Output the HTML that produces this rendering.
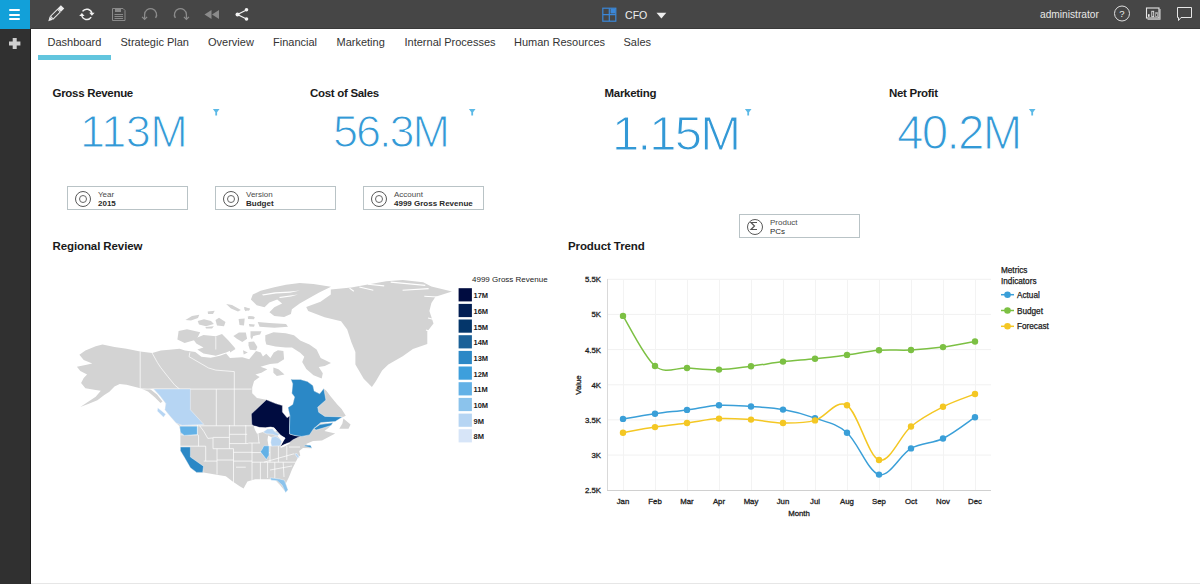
<!DOCTYPE html>
<html><head><meta charset="utf-8">
<style>
*{margin:0;padding:0;box-sizing:border-box}
html,body{width:1200px;height:584px;overflow:hidden;background:#fff;font-family:"Liberation Sans",sans-serif;position:relative}
.abs{position:absolute}
#top{left:0;top:0;width:1200px;height:29px;background:#464646;border-bottom:1px solid #393939}
#side{left:0;top:29px;width:31px;height:555px;background:#303030;border-right:1px solid #1c1c1c}
#menu{left:0;top:0;width:30px;height:29px;background:#12a0d9}
.bar{position:absolute;left:9px;width:11px;height:2px;background:#fff;border-radius:1px}
.tab{position:absolute;top:36px;font-size:11px;color:#333;white-space:nowrap}
#uline{left:38px;top:55px;width:73px;height:5px;background:#62c5de}
.kt{position:absolute;top:87px;font-size:11.5px;letter-spacing:-0.3px;font-weight:bold;color:#1a1a1a;white-space:nowrap}
.kv{position:absolute;top:105px;font-size:45px;color:#3399d6;white-space:nowrap;-webkit-text-stroke:1.2px #fff;letter-spacing:-0.5px}
.tri{position:absolute;width:0;height:0;border-left:3px solid transparent;border-right:3px solid transparent;border-top:4px solid #4ba8dc}
.fb{position:absolute;width:121px;height:24px;border:1px solid #b9c3c6;background:#fff}
.fb .ic{position:absolute;left:6.5px;top:3.5px;width:16.5px;height:16.5px;border:1.8px solid #595959;border-radius:50%}
.fb .ic2{position:absolute;left:10.5px;top:7.5px;width:8.5px;height:8.5px;border:1.1px solid #666;border-radius:50%}
.fb .l1{position:absolute;left:30px;top:2.5px;font-size:8px;color:#4a4a4a}
.fb .l2{position:absolute;left:30px;top:11.5px;font-size:8px;color:#2a2a2a;font-weight:bold}
.st{position:absolute;font-size:11.5px;letter-spacing:-0.1px;font-weight:bold;color:#1a1a1a;white-space:nowrap}
svg text.ax{font-family:"Liberation Sans",sans-serif;font-size:7.8px;fill:#222;stroke:#222;stroke-width:0.3px}
svg text.lg{font-family:"Liberation Sans",sans-serif;font-size:8.2px;fill:#1a1a1a;stroke:#1a1a1a;stroke-width:0.25px}
svg text.ml{font-family:"Liberation Sans",sans-serif;font-size:8px;fill:#222}
svg text.mll{font-family:"Liberation Sans",sans-serif;font-size:7.5px;font-weight:bold;fill:#222}
#bline{left:31px;top:583px;width:1169px;height:1px;background:#e6e6e6}
</style></head><body>
<div id="top" class="abs"></div>
<div id="side" class="abs"></div>
<div id="menu" class="abs"><div class="bar" style="top:9px"></div><div class="bar" style="top:13.5px"></div><div class="bar" style="top:18px"></div></div>
<svg class="abs" style="left:0;top:0" width="1200" height="29" viewBox="0 0 1200 29">
 <!-- pencil -->
 <g transform="translate(48.3,21.2) rotate(-45)">
  <path d="M0,0 L4.2,-2.3 L4.2,2.3 Z" fill="#e6e6e6"/>
  <rect x="5" y="-1.9" width="10" height="3.8" fill="none" stroke="#e6e6e6" stroke-width="1"/>
  <rect x="15.6" y="-2.4" width="4.6" height="4.8" fill="#ececec"/>
 </g>
 <!-- refresh -->
 <g fill="none" stroke="#f0f0f0" stroke-width="1.5">
  <path d="M82.5,11.4 A5.2,5.2 0 0 1 91.9,13.6"/>
  <path d="M91.2,17.2 A5.2,5.2 0 0 1 81.7,15"/>
 </g>
 <path d="M89.2,12.8 L94.6,12.8 L91.9,15.8 Z" fill="#f0f0f0"/>
 <path d="M79.2,16 L84.6,16 L81.9,13 Z" fill="#f0f0f0"/>
 <!-- floppy -->
 <g fill="none" stroke="#8a8a8a" stroke-width="1">
  <path d="M112.5,8.5 H123 L125,10.5 V20.5 H112.5 Z"/>
  <path d="M114.5,14.5 H123 M114.5,16.5 H123 M114.5,18.5 H123"/>
 </g>
 <rect x="115" y="8.5" width="6" height="3.5" fill="#8a8a8a"/>
 <!-- undo -->
 <g fill="none" stroke="#8c8c8c" stroke-width="1.3">
  <path d="M144.6,18.8 L144.6,14.6 A6,6 0 1 1 155.6,18"/>
  <path d="M142.1,16.9 L144.6,19.4 L147.1,16.9"/>
  <path d="M186.4,18.8 L186.4,14.6 A6,6 0 1 0 175.4,18"/>
  <path d="M183.9,16.9 L186.4,19.4 L188.9,16.9"/>
 </g>
 <!-- rewind -->
 <path d="M204.5,14.5 L211.5,10 V19 Z M212,14.5 L219,10 V19 Z" fill="#8a8a8a"/>
 <!-- share -->
 <g stroke="#f2f2f2" stroke-width="1.3" fill="none"><path d="M246.5,10 L237.5,14.5 L246.5,19"/></g>
 <circle cx="246.5" cy="9.8" r="1.8" fill="#f2f2f2"/><circle cx="237.5" cy="14.4" r="2" fill="#f2f2f2"/><circle cx="246.5" cy="19" r="1.8" fill="#f2f2f2"/>
 <!-- CFO icon -->
 <g fill="none" stroke="#3b87d8" stroke-width="1.2">
  <rect x="602.8" y="8.2" width="13" height="13"/>
  <path d="M609.3,8.2 V21.2 M602.8,14.7 H615.8"/>
 </g>
 <rect x="610.5" y="8.5" width="5" height="5" fill="#3b87d8"/>
 <text x="625" y="19" style="font-family:'Liberation Sans';font-size:10.6px;fill:#eee">CFO</text>
 <path d="M656.5,12.8 L666.3,12.8 L661.4,18.6 Z" fill="#eee"/>
 <text x="1040" y="18" style="font-family:'Liberation Sans';font-size:10.2px;fill:#e8e8e8">administrator</text>
 <!-- help -->
 <circle cx="1122" cy="13.5" r="7.5" fill="none" stroke="#e0e0e0" stroke-width="1"/>
 <text x="1122" y="17.2" text-anchor="middle" style="font-family:'Liberation Sans';font-size:9.5px;fill:#eee">?</text>
 <!-- chart icon -->
 <rect x="1146.5" y="8" width="12.5" height="10" fill="none" stroke="#e6e6e6" stroke-width="1.1"/>
 <path d="M1147.5,19.2 H1160 V9" fill="none" stroke="#d0d0d0" stroke-width="1.1"/>
 <rect x="1148" y="14.2" width="1.6" height="2.6" fill="#eee"/>
 <rect x="1151.8" y="11.3" width="1.9" height="5.4" fill="none" stroke="#e0e0e0" stroke-width="0.9"/>
 <rect x="1155.6" y="12.6" width="1.9" height="4.1" fill="none" stroke="#aaa" stroke-width="0.9"/>
 <!-- comment -->
 <path d="M1177.5,7.5 H1191.5 V17.5 H1181 L1178.5,20.5 V17.5 H1177.5 Z" fill="none" stroke="#e6e6e6" stroke-width="1"/>
</svg>
<!-- plus -->
<svg class="abs" style="left:0;top:29px" width="31" height="30"><path d="M14.7,9 V20 M9,14.4 H20.4" stroke="#cfcfcf" stroke-width="4"/></svg>

<div class="tab" style="left:47.5px">Dashboard</div>
<div class="tab" style="left:120.5px">Strategic Plan</div>
<div class="tab" style="left:208px">Overview</div>
<div class="tab" style="left:273px">Financial</div>
<div class="tab" style="left:336.5px">Marketing</div>
<div class="tab" style="left:404.5px">Internal Processes</div>
<div class="tab" style="left:514px">Human Resources</div>
<div class="tab" style="left:623.5px">Sales</div>
<div id="uline" class="abs"></div>

<div class="kt" style="left:52.5px">Gross Revenue</div>
<div class="kt" style="left:310px">Cost of Sales</div>
<div class="kt" style="left:604.5px">Marketing</div>
<div class="kt" style="left:889px">Net Profit</div>
<div class="kv" style="left:80px;top:106px">113M</div>
<div class="kv" style="left:333px;top:106px;letter-spacing:-2px">56.3M</div>
<div class="kv" style="left:612px;top:105px;font-size:49px;letter-spacing:-1.8px">1.15M</div>
<div class="kv" style="left:897px;top:105px;font-size:47.5px;letter-spacing:-1.7px">40.2M</div>
<svg class="abs" style="left:0;top:0" width="1200" height="130"><path d="M212.9,109 H219.5 L217.1,112.3 V115.5 H215.3 V112.3 Z" fill="#5cb9e6"/><path d="M468.9,109 H475.5 L473.1,112.3 V115.5 H471.3 V112.3 Z" fill="#5cb9e6"/><path d="M744.9,109 H751.5 L749.1,112.3 V115.5 H747.3 V112.3 Z" fill="#5cb9e6"/><path d="M1028.9,109 H1035.5 L1033.1,112.3 V115.5 H1031.3 V112.3 Z" fill="#5cb9e6"/></svg>

<div class="fb" style="left:67px;top:186px"><div class="ic"></div><div class="ic2"></div><div class="l1">Year</div><div class="l2">2015</div></div>
<div class="fb" style="left:215px;top:186px"><div class="ic"></div><div class="ic2"></div><div class="l1">Version</div><div class="l2">Budget</div></div>
<div class="fb" style="left:363px;top:186px"><div class="ic"></div><div class="ic2"></div><div class="l1">Account</div><div class="l2">4999 Gross Revenue</div></div>
<div class="fb" style="left:739px;top:214px"><div class="ic"></div><div class="l1">Product</div><div class="l2" style="font-weight:normal">PCs</div><svg style="position:absolute;left:9px;top:6px" width="10" height="10"><path d="M8,1.5 H2 L5.5,5 L2,8.5 H8" fill="none" stroke="#555" stroke-width="1.2"/></svg></div>

<div class="st" style="left:52.5px;top:240px">Regional Review</div>
<div class="st" style="left:568px;top:240px">Product Trend</div>

<svg class="abs" style="left:0;top:0" width="1200" height="584" viewBox="0 0 1200 584">
<polygon points="79.4,354.8 85.4,350.6 95.7,346.3 102.5,344.6 114.5,347.1 126.5,348.8 140.2,351.4 152.2,353.1 160.8,350.6 169.4,349.7 179.6,348.8 185.0,350.6 195.3,352.1 201.4,356.7 210.7,357.7 220.0,355.7 226.1,353.6 230.0,357.9 242.3,357.2 249.2,359.2 256.0,351.0 260.8,352.4 262.9,356.5 266.3,353.8 270.4,357.9 273.8,352.4 277.9,350.3 283.4,351.0 284.1,359.2 277.7,363.3 270.0,364.1 260.5,366.7 267.4,369.2 261.4,372.7 255.4,374.4 259.7,377.0 254.1,381.0 252.2,387.6 252.2,393.2 257.0,398.0 266.4,399.8 275.8,403.6 282.4,405.5 282.4,412.1 287.1,417.7 289.9,415.8 288.0,407.4 292.7,404.5 294.6,397.0 291.8,393.2 292.7,383.8 290.8,379.1 292.3,379.5 300.5,379.5 307.4,381.5 312.9,385.6 314.2,391.1 319.7,393.8 323.8,388.4 326.6,391.1 330.7,396.6 337.5,404.8 341.6,408.9 345.8,415.8 342.4,417.2 318.0,424.0 333.0,422.5 329.0,427.5 324.4,431.0 335.2,433.4 322.0,440.6 313.0,441.0 306.0,444.0 312.0,448.3 303.0,448.0 299.2,451.0 300.3,455.4 298.3,457.0 295.2,463.1 292.1,469.3 289.0,477.0 285.9,483.2 287.5,490.9 285.2,491.6 279.8,484.7 275.2,480.1 270.5,479.3 261.3,479.3 255.1,479.3 247.4,481.6 243.6,488.6 239.7,486.3 232.0,480.9 225.8,476.2 216.6,474.7 203.5,472.4 196.6,472.4 190.4,467.8 184.2,457.0 180.4,450.8 180.4,447.0 180.4,435.4 180.4,432.3 179.6,426.2 176.1,423.1 169.9,416.0 164.8,409.8 165.8,403.6 159.6,395.4 153.5,388.7 147.0,389.0 140.2,388.2 133.4,386.5 126.5,384.8 119.7,384.0 114.5,386.5 109.4,391.7 104.3,395.1 97.4,400.2 88.8,403.7 80.3,407.1 95.7,396.8 100.8,390.8 95.7,390.0 85.4,388.2 81.1,383.1 83.7,378.0 87.1,374.5 80.3,371.1 76.9,366.8 85.4,365.1 92.3,363.4 83.7,360.0" fill="#d3d3d3" />
<polygon points="141.0,388.4 150.0,389.0 157.0,394.5 162.5,401.5 160.5,403.0 155.0,397.5 148.0,391.5" fill="#d3d3d3" />
<polygon points="260.6,290.7 274.3,287.3 286.0,284.8 299.7,282.9 313.4,283.9 331.0,286.8 319.2,292.6 308.5,298.5 299.7,303.4 291.9,309.3 290.9,314.1 284.1,317.1 274.3,316.1 269.4,312.2 274.3,307.3 282.1,303.4 277.2,299.5 269.4,302.4 264.5,307.3 256.7,305.3 250.9,299.5 252.8,294.6" fill="#d3d3d3" />
<polygon points="257.7,322.0 269.4,322.9 286.0,323.9 288.0,326.8 274.3,327.8 259.6,326.8" fill="#d3d3d3" />
<polygon points="245.0,307.3 249.9,309.3 245.0,311.2" fill="#d3d3d3" />
<polygon points="248.9,316.0 253.8,316.5 253.0,319.0 249.0,318.5" fill="#d3d3d3" />
<polygon points="248.9,323.9 254.8,324.5 254.0,326.8 249.5,326.5" fill="#d3d3d3" />
<polygon points="185.4,320.0 192.0,316.0 199.3,314.7 198.0,318.0 191.0,320.5" fill="#d3d3d3" />
<polygon points="197.7,321.0 204.0,319.3 211.0,321.0 213.9,324.0 206.0,326.2 199.0,324.5" fill="#d3d3d3" />
<polygon points="205.4,327.0 213.9,326.2 212.0,328.5 206.0,328.5" fill="#d3d3d3" />
<polygon points="207.7,311.5 214.7,310.8 213.0,313.9 208.0,313.9" fill="#d3d3d3" />
<polygon points="215.5,320.0 219.0,317.7 225.5,322.0 224.0,326.2 217.0,325.5" fill="#d3d3d3" />
<polygon points="226.2,304.0 232.0,305.0 240.9,310.0 238.0,311.6 231.0,308.5" fill="#d3d3d3" />
<polygon points="244.0,307.0 250.1,308.5 249.0,310.8 244.5,310.0" fill="#d3d3d3" />
<polygon points="238.6,319.0 244.7,318.5 244.0,325.5 239.5,325.0" fill="#d3d3d3" />
<polygon points="247.8,316.2 254.8,317.0 254.0,319.3 248.0,319.0" fill="#d3d3d3" />
<polygon points="178.6,331.0 187.0,329.2 200.2,332.2 196.6,339.4 184.6,343.0 177.4,339.4" fill="#d3d3d3" />
<polygon points="193.2,339.2 203.5,335.1 215.8,336.2 222.0,334.1 228.2,340.3 235.4,348.5 226.1,352.6 215.8,355.7 203.5,353.6 197.3,349.5 203.5,347.5 196.3,343.4" fill="#d3d3d3" />
<polygon points="233.4,336.0 238.9,332.5 245.8,332.5 247.1,338.7 242.3,342.1 236.8,338.7" fill="#d3d3d3" />
<polygon points="248.5,342.1 254.0,341.4 257.4,346.9 256.0,350.3 249.9,349.7 248.5,345.5" fill="#d3d3d3" />
<polygon points="250.5,331.2 261.5,331.2 260.1,334.6 253.3,336.0 251.9,339.4 250.5,337.3" fill="#d3d3d3" />
<polygon points="230.0,346.9 235.5,349.0 230.0,352.4" fill="#d3d3d3" />
<polygon points="243.0,350.3 247.8,352.4 243.7,354.5" fill="#d3d3d3" />
<polygon points="265.3,335.3 273.5,332.2 285.8,333.2 294.0,335.3 300.2,340.4 309.4,344.5 316.6,349.6 320.7,357.9 331.0,363.0 324.8,366.1 318.7,367.1 322.8,373.3 321.7,378.4 313.5,375.3 306.3,369.1 302.2,362.0 304.3,356.8 300.2,352.7 292.0,347.6 285.8,347.6 275.5,346.6 266.3,344.5 265.3,340.4" fill="#d3d3d3" />
<polygon points="273.4,367.5 278.5,369.2 284.5,374.4 276.8,376.1 273.4,372.7" fill="#d3d3d3" />
<polygon points="343.4,418.5 350.6,424.6 348.5,428.7 339.3,428.7 342.4,423.6" fill="#d3d3d3" />
<polygon points="330.8,289.5 351.3,287.5 367.8,284.4 386.2,281.3 402.7,279.9 423.2,282.3 431.4,286.4 452.0,291.6 435.5,296.7 431.4,302.9 429.4,311.1 433.5,323.4 427.3,331.6 427.3,343.9 412.9,349.1 402.7,356.2 388.3,364.5 382.1,370.6 376.0,380.9 371.9,387.0 363.7,378.8 355.4,364.5 355.4,352.1 351.3,341.9 347.2,329.5 341.1,321.3 324.6,317.2 308.2,311.1 306.2,307.0 320.5,301.8 330.8,294.6" fill="#d3d3d3" />
<polyline points="349.5,288.1 353.8,291.3" fill="none" stroke="#ffffff" stroke-width="1.1"/>
<polyline points="359.3,287 373.3,290.3" fill="none" stroke="#ffffff" stroke-width="1.1"/>
<polyline points="367.9,284.3 384.2,285.9" fill="none" stroke="#ffffff" stroke-width="1.1"/>
<polyline points="390.7,282.1 425.3,285.4" fill="none" stroke="#ffffff" stroke-width="1.1"/>
<polyline points="402.6,290.3 428.6,288.6" fill="none" stroke="#ffffff" stroke-width="1.1"/>
<polyline points="424.3,296.2 441.6,297.3" fill="none" stroke="#ffffff" stroke-width="1.1"/>
<polyline points="428,318 436,320" fill="none" stroke="#ffffff" stroke-width="1.1"/>
<polyline points="426,330 434,333" fill="none" stroke="#ffffff" stroke-width="1.1"/>
<polyline points="140.2,351.4 140.2,388.2" fill="none" stroke="#ffffff" stroke-width="0.8" stroke-opacity="0.9"/>
<polyline points="152.2,353.1 157.4,362.5 160.8,367.7 167.6,376.3 174.5,384.8 179.6,389.1" fill="none" stroke="#ffffff" stroke-width="0.8" stroke-opacity="0.9"/>
<polyline points="140.2,389.1 251.6,389.1" fill="none" stroke="#ffffff" stroke-width="0.8" stroke-opacity="0.9"/>
<polyline points="189.9,352.3 189.1,356.7 208.6,368 215.8,370.1 234.3,371.6 234.3,425.7" fill="none" stroke="#ffffff" stroke-width="0.8" stroke-opacity="0.9"/>
<polyline points="216.3,389.1 216.3,425.7" fill="none" stroke="#ffffff" stroke-width="0.8" stroke-opacity="0.9"/>
<polyline points="179.6,425.8 253,425.8" fill="none" stroke="#ffffff" stroke-width="0.8" stroke-opacity="0.9"/>
<polyline points="215.8,336.5 215.8,349.5" fill="none" stroke="#ffffff" stroke-width="0.8" stroke-opacity="0.9"/>
<polyline points="197.5,425 197.5,434.8 198.6,435.4 198.6,446.2" fill="none" stroke="#ffffff" stroke-width="0.8" stroke-opacity="0.9"/>
<polyline points="180.5,434.8 197.5,434.8" fill="none" stroke="#ffffff" stroke-width="0.8" stroke-opacity="0.9"/>
<polyline points="180,446.2 205.7,446.2" fill="none" stroke="#ffffff" stroke-width="0.8" stroke-opacity="0.9"/>
<polyline points="205.7,446.2 205.7,461.1" fill="none" stroke="#ffffff" stroke-width="0.8" stroke-opacity="0.9"/>
<polyline points="203.7,461.1 217,461.1" fill="none" stroke="#ffffff" stroke-width="0.8" stroke-opacity="0.9"/>
<polyline points="199.6,425.6 203.7,431.2 207.8,438.4 213,437.9" fill="none" stroke="#ffffff" stroke-width="0.8" stroke-opacity="0.9"/>
<polyline points="213,437.4 229.4,437.4" fill="none" stroke="#ffffff" stroke-width="0.8" stroke-opacity="0.9"/>
<polyline points="213,437.9 213,448.7" fill="none" stroke="#ffffff" stroke-width="0.8" stroke-opacity="0.9"/>
<polyline points="213,448.7 233.5,448.7" fill="none" stroke="#ffffff" stroke-width="0.8" stroke-opacity="0.9"/>
<polyline points="217,448.7 217,474.5" fill="none" stroke="#ffffff" stroke-width="0.8" stroke-opacity="0.9"/>
<polyline points="217,460 233.5,460" fill="none" stroke="#ffffff" stroke-width="0.8" stroke-opacity="0.9"/>
<polyline points="233.5,448.7 233.5,484" fill="none" stroke="#ffffff" stroke-width="0.8" stroke-opacity="0.9"/>
<polyline points="229.4,425 229.4,448.7" fill="none" stroke="#ffffff" stroke-width="0.8" stroke-opacity="0.9"/>
<polyline points="229.4,434.3 247.2,434.3" fill="none" stroke="#ffffff" stroke-width="0.8" stroke-opacity="0.9"/>
<polyline points="229.4,443.6 248.4,443.6" fill="none" stroke="#ffffff" stroke-width="0.8" stroke-opacity="0.9"/>
<polyline points="233.5,452.3 252,452.3" fill="none" stroke="#ffffff" stroke-width="0.8" stroke-opacity="0.9"/>
<polyline points="233.5,461.1 252,461.1" fill="none" stroke="#ffffff" stroke-width="0.8" stroke-opacity="0.9"/>
<polyline points="236,467.2 245.8,467.2" fill="none" stroke="#ffffff" stroke-width="0.8" stroke-opacity="0.9"/>
<polyline points="245.8,425 245.8,443.6" fill="none" stroke="#ffffff" stroke-width="0.8" stroke-opacity="0.9"/>
<polyline points="248.4,443 260,443" fill="none" stroke="#ffffff" stroke-width="0.8" stroke-opacity="0.9"/>
<polyline points="252,443 252,480" fill="none" stroke="#ffffff" stroke-width="0.8" stroke-opacity="0.9"/>
<polyline points="252,452.6 270,452.6" fill="none" stroke="#ffffff" stroke-width="0.8" stroke-opacity="0.9"/>
<polyline points="252,462.2 296.4,462.2" fill="none" stroke="#ffffff" stroke-width="0.8" stroke-opacity="0.9"/>
<polyline points="260.4,462.2 260.4,480" fill="none" stroke="#ffffff" stroke-width="0.8" stroke-opacity="0.9"/>
<polyline points="267.6,462.2 267.6,478" fill="none" stroke="#ffffff" stroke-width="0.8" stroke-opacity="0.9"/>
<polyline points="274.8,462.2 274.8,478" fill="none" stroke="#ffffff" stroke-width="0.8" stroke-opacity="0.9"/>
<polyline points="283.2,462.2 284,477" fill="none" stroke="#ffffff" stroke-width="0.8" stroke-opacity="0.9"/>
<polyline points="270,446 270,462.2" fill="none" stroke="#ffffff" stroke-width="0.8" stroke-opacity="0.9"/>
<polyline points="278.4,446 278.4,462.2" fill="none" stroke="#ffffff" stroke-width="0.8" stroke-opacity="0.9"/>
<polyline points="286.8,446 286.8,460" fill="none" stroke="#ffffff" stroke-width="0.8" stroke-opacity="0.9"/>
<polyline points="264,462.2 294,453.8" fill="none" stroke="#ffffff" stroke-width="0.8" stroke-opacity="0.9"/>
<polyline points="270,470 292,466" fill="none" stroke="#ffffff" stroke-width="0.8" stroke-opacity="0.9"/>
<polyline points="289,447 300,447" fill="none" stroke="#ffffff" stroke-width="0.8" stroke-opacity="0.9"/>
<polyline points="258,433 259,443" fill="none" stroke="#ffffff" stroke-width="0.8" stroke-opacity="0.9"/>
<polygon points="153.5,388.9 190.4,388.9 190.4,409.8 203.8,424.4 182.2,425.4 176.1,423.1 169.9,416.0 164.8,409.8 165.8,403.6 159.6,395.4" fill="#b6d5f3" stroke="#fff" stroke-width="0.4"/>
<polygon points="157.8,407.8 165.8,414.2 163.5,417.2 157.2,411.0" fill="#b6d5f3" stroke="#fff" stroke-width="0.4"/>
<polygon points="179.6,426.2 197.3,426.2 197.3,434.6 184.2,435.4 180.4,432.3" fill="#63b1e6" stroke="#fff" stroke-width="0.4"/>
<polygon points="180.4,447.0 190.4,447.0 190.4,457.0 203.5,466.2 202.7,472.4 196.6,472.4 190.4,467.8 184.2,457.0 180.4,450.8" fill="#2b88c6" stroke="#fff" stroke-width="0.4"/>
<polygon points="251.3,414.0 266.4,399.8 275.8,403.6 282.4,405.5 282.4,412.1 287.1,417.7 289.9,415.8 289.5,427.0 289.6,434.0 295.0,435.5 301.6,436.4 298.1,437.3 293.0,439.8 289.5,442.4 284.4,444.5 280.1,446.7 283.5,440.7 285.2,438.1 281.0,435.5 276.7,430.8 274.1,427.8 270.7,427.0 265.5,427.8 259.6,427.4 253.6,425.7 251.8,424.4" fill="#000c40" stroke="#fff" stroke-width="0.4"/>
<polygon points="292.3,379.5 300.5,379.5 307.4,381.5 312.9,385.6 314.2,391.1 319.7,393.8 323.8,388.4 325.9,400.0 317.7,407.2 318.7,412.3 324.9,416.4 342.4,416.9 335.2,421.6 320.8,422.6 313.6,428.7 309.5,434.9 301.6,436.4 295.0,435.5 289.6,434.0 289.5,427.0 289.9,415.8 288.0,407.4 292.7,404.5 294.6,397.0 291.8,393.2 292.7,383.8 290.8,379.1" fill="#2b88c6" stroke="#fff" stroke-width="0.4"/>
<polygon points="314.0,428.5 320.0,424.5 333.0,422.8 331.0,425.5 322.0,428.3 316.0,430.0" fill="#2b88c6" stroke="#fff" stroke-width="0.4"/>
<polygon points="271.5,437.3 275.8,436.4 280.1,439.0 281.8,441.5 280.1,445.8 271.5,446.2 270.7,442.4" fill="#b6d5f3" stroke="#fff" stroke-width="0.4"/>
<polygon points="263.0,432.1 267.3,429.1 272.4,428.7 275.0,431.7 279.2,434.3 277.5,436.0 272.4,434.3 266.4,433.8" fill="#b6d5f3" stroke="#fff" stroke-width="0.4"/>
<polygon points="263.8,445.8 269.0,445.8 269.0,455.2 266.4,459.5 263.8,456.1 260.4,451.8 262.1,449.2" fill="#63b1e6" stroke="#fff" stroke-width="0.4"/>
<polygon points="294.7,453.8 297.0,453.5 299.5,457.5 297.5,457.8" fill="#b6d5f3" stroke="#fff" stroke-width="0.4"/>
<polygon points="270.0,477.8 279.6,479.0 284.4,480.2 288.0,489.7 285.6,492.7 282.0,485.0 277.2,480.8 271.2,480.2" fill="#8bc3ec" stroke="#fff" stroke-width="0.4"/>
<polygon points="304.4,445.2 310.5,445.2 312.0,448.3 309.5,447.2 304.4,446.2" fill="#2b88c6" stroke="#fff" stroke-width="0.4"/>
<polygon points="262.0,294.5 275.0,292.2 290.0,291.5 300.0,290.5 290.0,292.8 276.0,293.5 263.0,295.5" fill="#ffffff" />
<polygon points="279.0,297.0 290.0,295.5 298.0,294.5 291.0,296.5 280.0,298.0" fill="#ffffff" />
<polygon points="253.6,425.7 259.6,427.4 265.5,427.8 270.7,427.0 274.1,427.8 276.7,430.8 275.0,431.7 272.4,428.7 267.3,429.1 263.0,432.1 257.0,433.8 255.0,430.0" fill="#ffffff" />
<polygon points="268.1,435.5 271.5,437.3 270.7,442.4 271.5,446.2 268.5,446.0 267.5,440.0" fill="#ffffff" />
<polygon points="277.5,436.0 279.2,434.3 281.0,435.5 285.2,438.1 283.5,440.7 280.1,446.7 281.8,441.5 280.1,439.0" fill="#ffffff" />
<polygon points="280.1,446.7 284.4,444.5 289.5,442.4 290.2,443.3 285.0,446.2 281.0,447.8" fill="#ffffff" />
<text x="472" y="282" class="ml">4999 Gross Revenue</text>
<rect x="458.6" y="288.2" width="13.3" height="13.2" fill="#000c40"/>
<text x="473.5" y="298.2" class="mll">17M</text>
<rect x="458.6" y="303.9" width="13.3" height="13.2" fill="#021e53"/>
<text x="473.5" y="313.9" class="mll">16M</text>
<rect x="458.6" y="319.5" width="13.3" height="13.2" fill="#04366a"/>
<text x="473.5" y="329.5" class="mll">15M</text>
<rect x="458.6" y="335.2" width="13.3" height="13.2" fill="#1b6198"/>
<text x="473.5" y="345.2" class="mll">14M</text>
<rect x="458.6" y="350.9" width="13.3" height="13.2" fill="#2b88c6"/>
<text x="473.5" y="360.9" class="mll">13M</text>
<rect x="458.6" y="366.5" width="13.3" height="13.2" fill="#3d9fdc"/>
<text x="473.5" y="376.5" class="mll">12M</text>
<rect x="458.6" y="382.2" width="13.3" height="13.2" fill="#63b1e6"/>
<text x="473.5" y="392.2" class="mll">11M</text>
<rect x="458.6" y="397.9" width="13.3" height="13.2" fill="#8bc3ec"/>
<text x="473.5" y="407.9" class="mll">10M</text>
<rect x="458.6" y="413.6" width="13.3" height="13.2" fill="#b6d5f3"/>
<text x="473.5" y="423.6" class="mll">9M</text>
<rect x="458.6" y="429.2" width="13.3" height="13.2" fill="#d7e5f8"/>
<text x="473.5" y="439.2" class="mll">8M</text>
<line x1="607" y1="279.3" x2="991" y2="279.3" stroke="#f1f1f1" stroke-width="1"/>
<line x1="607" y1="314.4" x2="991" y2="314.4" stroke="#f1f1f1" stroke-width="1"/>
<line x1="607" y1="349.6" x2="991" y2="349.6" stroke="#f1f1f1" stroke-width="1"/>
<line x1="607" y1="384.8" x2="991" y2="384.8" stroke="#f1f1f1" stroke-width="1"/>
<line x1="607" y1="419.9" x2="991" y2="419.9" stroke="#f1f1f1" stroke-width="1"/>
<line x1="607" y1="455.1" x2="991" y2="455.1" stroke="#f1f1f1" stroke-width="1"/>
<line x1="623.5" y1="279" x2="623.5" y2="490" stroke="#f3f3f3" stroke-width="1"/>
<line x1="655.5" y1="279" x2="655.5" y2="490" stroke="#f3f3f3" stroke-width="1"/>
<line x1="687.5" y1="279" x2="687.5" y2="490" stroke="#f3f3f3" stroke-width="1"/>
<line x1="719.5" y1="279" x2="719.5" y2="490" stroke="#f3f3f3" stroke-width="1"/>
<line x1="751.5" y1="279" x2="751.5" y2="490" stroke="#f3f3f3" stroke-width="1"/>
<line x1="783.5" y1="279" x2="783.5" y2="490" stroke="#f3f3f3" stroke-width="1"/>
<line x1="815.5" y1="279" x2="815.5" y2="490" stroke="#f3f3f3" stroke-width="1"/>
<line x1="847.5" y1="279" x2="847.5" y2="490" stroke="#f3f3f3" stroke-width="1"/>
<line x1="879.5" y1="279" x2="879.5" y2="490" stroke="#f3f3f3" stroke-width="1"/>
<line x1="911.5" y1="279" x2="911.5" y2="490" stroke="#f3f3f3" stroke-width="1"/>
<line x1="943.5" y1="279" x2="943.5" y2="490" stroke="#f3f3f3" stroke-width="1"/>
<line x1="975.5" y1="279" x2="975.5" y2="490" stroke="#f3f3f3" stroke-width="1"/>
<line x1="607.5" y1="279" x2="607.5" y2="490.5" stroke="#d9d9d9" stroke-width="1"/>
<line x1="607" y1="490.5" x2="991" y2="490.5" stroke="#d0d0d0" stroke-width="1"/>
<text x="601" y="282.3" text-anchor="end" class="ax">5.5K</text>
<text x="601" y="317.4" text-anchor="end" class="ax">5K</text>
<text x="601" y="352.6" text-anchor="end" class="ax">4.5K</text>
<text x="601" y="387.8" text-anchor="end" class="ax">4K</text>
<text x="601" y="422.9" text-anchor="end" class="ax">3.5K</text>
<text x="601" y="458.1" text-anchor="end" class="ax">3K</text>
<text x="601" y="493.2" text-anchor="end" class="ax">2.5K</text>
<text x="623" y="504" text-anchor="middle" class="ax">Jan</text>
<text x="655" y="504" text-anchor="middle" class="ax">Feb</text>
<text x="687" y="504" text-anchor="middle" class="ax">Mar</text>
<text x="719" y="504" text-anchor="middle" class="ax">Apr</text>
<text x="751" y="504" text-anchor="middle" class="ax">May</text>
<text x="783" y="504" text-anchor="middle" class="ax">Jun</text>
<text x="815" y="504" text-anchor="middle" class="ax">Jul</text>
<text x="847" y="504" text-anchor="middle" class="ax">Aug</text>
<text x="879" y="504" text-anchor="middle" class="ax">Sep</text>
<text x="911" y="504" text-anchor="middle" class="ax">Oct</text>
<text x="943" y="504" text-anchor="middle" class="ax">Nov</text>
<text x="975" y="504" text-anchor="middle" class="ax">Dec</text>
<text x="799" y="516" text-anchor="middle" class="ax">Month</text>
<text x="0" y="0" text-anchor="middle" class="ax" transform="translate(581,385) rotate(-90)">Value</text>
<path d="M623.0,315.9 C628.3,324.2 644.3,357.3 655.0,366.0 C665.7,374.7 676.3,367.4 687.0,368.0 C697.7,368.6 708.3,369.9 719.0,369.6 C729.7,369.3 740.3,367.5 751.0,366.2 C761.7,364.9 772.3,362.9 783.0,361.6 C793.7,360.4 804.3,359.8 815.0,358.7 C825.7,357.6 836.3,356.3 847.0,354.9 C857.7,353.5 868.3,351.1 879.0,350.3 C889.7,349.5 900.3,350.5 911.0,350.0 C921.7,349.5 932.3,348.5 943.0,347.1 C953.7,345.7 969.7,342.4 975.0,341.5" fill="none" stroke="#7cc043" stroke-width="1.5"/>
<circle cx="623" cy="315.9" r="3.2" fill="#7cc043"/>
<circle cx="655" cy="366.0" r="3.2" fill="#7cc043"/>
<circle cx="687" cy="368.0" r="3.2" fill="#7cc043"/>
<circle cx="719" cy="369.6" r="3.2" fill="#7cc043"/>
<circle cx="751" cy="366.2" r="3.2" fill="#7cc043"/>
<circle cx="783" cy="361.6" r="3.2" fill="#7cc043"/>
<circle cx="815" cy="358.7" r="3.2" fill="#7cc043"/>
<circle cx="847" cy="354.9" r="3.2" fill="#7cc043"/>
<circle cx="879" cy="350.3" r="3.2" fill="#7cc043"/>
<circle cx="911" cy="350.0" r="3.2" fill="#7cc043"/>
<circle cx="943" cy="347.1" r="3.2" fill="#7cc043"/>
<circle cx="975" cy="341.5" r="3.2" fill="#7cc043"/>
<path d="M623.0,418.9 C628.3,418.0 644.3,415.2 655.0,413.7 C665.7,412.2 676.3,411.3 687.0,409.9 C697.7,408.5 708.3,405.9 719.0,405.3 C729.7,404.7 740.3,405.8 751.0,406.5 C761.7,407.2 772.3,407.7 783.0,409.6 C793.7,411.5 804.3,414.2 815.0,418.1 C825.7,422.0 836.3,423.3 847.0,432.7 C857.7,442.1 868.3,472.0 879.0,474.6 C889.7,477.2 900.3,454.4 911.0,448.4 C921.7,442.4 932.3,443.7 943.0,438.5 C953.7,433.3 969.7,420.8 975.0,417.2" fill="none" stroke="#3a9fd8" stroke-width="1.5"/>
<circle cx="623" cy="418.9" r="3.2" fill="#3a9fd8"/>
<circle cx="655" cy="413.7" r="3.2" fill="#3a9fd8"/>
<circle cx="687" cy="409.9" r="3.2" fill="#3a9fd8"/>
<circle cx="719" cy="405.3" r="3.2" fill="#3a9fd8"/>
<circle cx="751" cy="406.5" r="3.2" fill="#3a9fd8"/>
<circle cx="783" cy="409.6" r="3.2" fill="#3a9fd8"/>
<circle cx="815" cy="418.1" r="3.2" fill="#3a9fd8"/>
<circle cx="847" cy="432.7" r="3.2" fill="#3a9fd8"/>
<circle cx="879" cy="474.6" r="3.2" fill="#3a9fd8"/>
<circle cx="911" cy="448.4" r="3.2" fill="#3a9fd8"/>
<circle cx="943" cy="438.5" r="3.2" fill="#3a9fd8"/>
<circle cx="975" cy="417.2" r="3.2" fill="#3a9fd8"/>
<path d="M623.0,432.7 C628.3,431.8 644.3,428.7 655.0,427.1 C665.7,425.5 676.3,424.4 687.0,423.0 C697.7,421.6 708.3,419.2 719.0,418.6 C729.7,418.0 740.3,418.9 751.0,419.6 C761.7,420.3 772.3,422.9 783.0,423.0 C793.7,423.1 804.3,423.3 815.0,420.4 C825.7,417.4 836.3,398.7 847.0,405.3 C857.7,411.9 868.3,456.5 879.0,460.0 C889.7,463.5 900.3,435.4 911.0,426.5 C921.7,417.6 932.3,412.2 943.0,406.8 C953.7,401.4 969.7,396.1 975.0,394.0" fill="none" stroke="#f4c723" stroke-width="1.5"/>
<circle cx="623" cy="432.7" r="3.2" fill="#f4c723"/>
<circle cx="655" cy="427.1" r="3.2" fill="#f4c723"/>
<circle cx="687" cy="423.0" r="3.2" fill="#f4c723"/>
<circle cx="719" cy="418.6" r="3.2" fill="#f4c723"/>
<circle cx="751" cy="419.6" r="3.2" fill="#f4c723"/>
<circle cx="783" cy="423.0" r="3.2" fill="#f4c723"/>
<circle cx="815" cy="420.4" r="3.2" fill="#f4c723"/>
<circle cx="847" cy="405.3" r="3.2" fill="#f4c723"/>
<circle cx="879" cy="460.0" r="3.2" fill="#f4c723"/>
<circle cx="911" cy="426.5" r="3.2" fill="#f4c723"/>
<circle cx="943" cy="406.8" r="3.2" fill="#f4c723"/>
<circle cx="975" cy="394.0" r="3.2" fill="#f4c723"/>
<text x="1001" y="273" class="lg">Metrics</text>
<text x="1001" y="283.5" class="lg">Indicators</text>
<line x1="1001" y1="294.7" x2="1014" y2="294.7" stroke="#3a9fd8" stroke-width="1.5"/>
<circle cx="1007.5" cy="294.7" r="3.3" fill="#3a9fd8"/>
<text x="1017" y="297.7" class="lg">Actual</text>
<line x1="1001" y1="310.5" x2="1014" y2="310.5" stroke="#7cc043" stroke-width="1.5"/>
<circle cx="1007.5" cy="310.5" r="3.3" fill="#7cc043"/>
<text x="1017" y="313.5" class="lg">Budget</text>
<line x1="1001" y1="326.3" x2="1014" y2="326.3" stroke="#f4c723" stroke-width="1.5"/>
<circle cx="1007.5" cy="326.3" r="3.3" fill="#f4c723"/>
<text x="1017" y="329.3" class="lg">Forecast</text>
</svg>
<div id="bline" class="abs"></div>
</body></html>
